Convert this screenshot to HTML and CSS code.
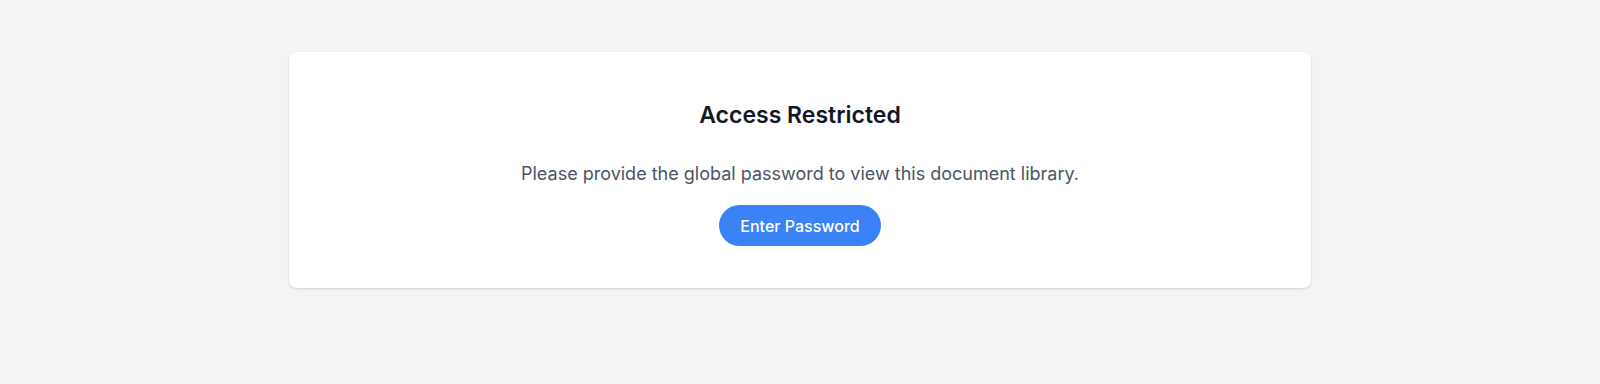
FILE: index.html
```html
<!DOCTYPE html>
<html lang="en">
<head>
    <meta charset="UTF-8">
    <meta name="viewport" content="width=device-width, initial-scale=1.0">
    <title>Access Restricted</title>
    <link rel="stylesheet" href="styles.css">
</head>
<body>
    <main class="page">
        <div class="access-card">
            <h2>Access Restricted</h2>
            <p>Please provide the global password to view this document library.</p>
            <button class="password-button">Enter Password</button>
        </div>
    </main>
</body>
</html>
```

FILE: styles.css
```css
body {
    font-family: Inter, "Noto Sans", sans-serif;
    margin: 0;
    padding: 0;
    background-color: #f3f4f6;
}

.page {
    padding: 52px 16px;
}

.access-card {
    max-width: 1022px;
    margin: 0 auto;
    box-sizing: border-box;
    background-color: #fff;
    border-radius: 8px;
    box-shadow: 0 1px 3px rgba(0, 0, 0, 0.1), 0 1px 2px rgba(0, 0, 0, 0.06);
    padding: 47px 24px 42px;
    text-align: center;
}

.access-card h2 {
    margin: 0 0 29px;
    font-size: 23px;
    line-height: 32px;
    font-weight: 600;
    color: #111827;
}

.access-card p {
    margin: 0 0 17px;
    font-size: 18px;
    line-height: 28px;
    color: #4b5563;
}

.password-button {
    font-family: inherit;
    background-color: #3b82f6;
    color: #fff;
    font-size: 16px;
    font-weight: 500;
    line-height: 24px;
    padding: 8.5px 21px;
    border: none;
    border-radius: 9999px;
    cursor: pointer;
}

.password-button:hover {
    background-color: #2563eb;
}
```
